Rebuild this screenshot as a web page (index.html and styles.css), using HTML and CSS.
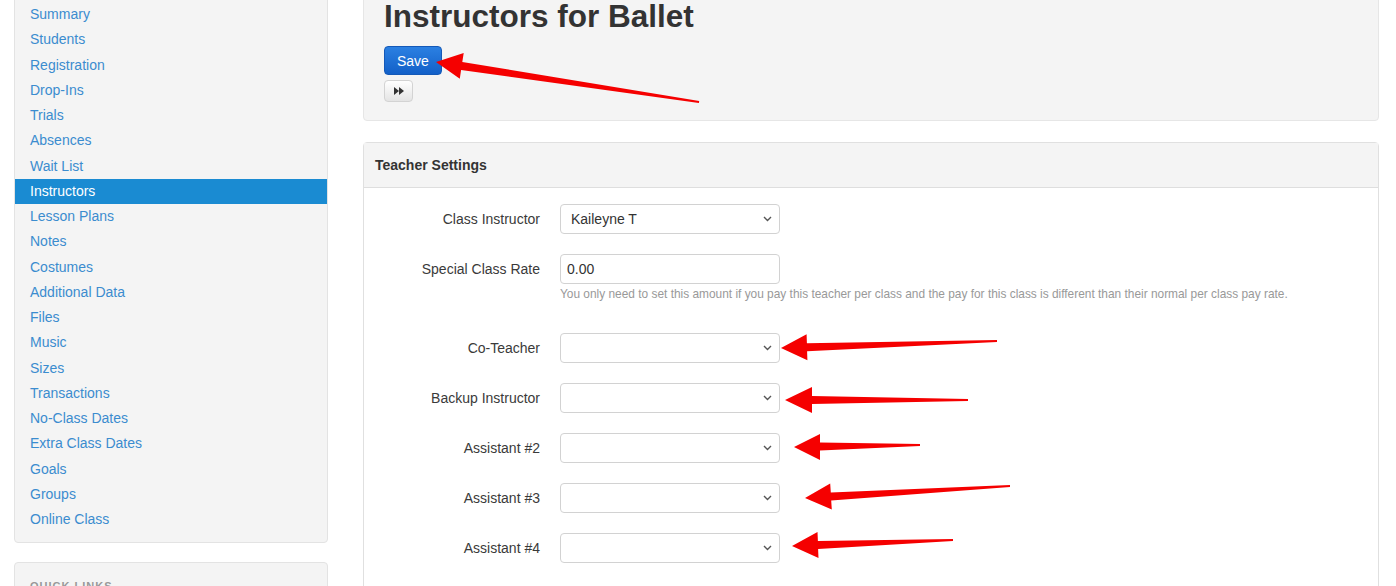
FILE: index.html
```html
<!DOCTYPE html>
<html lang="en">
<head>
    <meta charset="UTF-8">
    <title>Instructors for Ballet</title>
    <link rel="stylesheet" href="styles.css">
</head>
<body>
    <div class="page">
        <aside class="sidebar">
            <div class="side-panel">
                <ul class="side-nav">
                    <li><a href="#">Summary</a></li>
                    <li><a href="#">Students</a></li>
                    <li><a href="#">Registration</a></li>
                    <li><a href="#">Drop-Ins</a></li>
                    <li><a href="#">Trials</a></li>
                    <li><a href="#">Absences</a></li>
                    <li><a href="#">Wait List</a></li>
                    <li class="active"><a href="#">Instructors</a></li>
                    <li><a href="#">Lesson Plans</a></li>
                    <li><a href="#">Notes</a></li>
                    <li><a href="#">Costumes</a></li>
                    <li><a href="#">Additional Data</a></li>
                    <li><a href="#">Files</a></li>
                    <li><a href="#">Music</a></li>
                    <li><a href="#">Sizes</a></li>
                    <li><a href="#">Transactions</a></li>
                    <li><a href="#">No-Class Dates</a></li>
                    <li><a href="#">Extra Class Dates</a></li>
                    <li><a href="#">Goals</a></li>
                    <li><a href="#">Groups</a></li>
                    <li><a href="#">Online Class</a></li>
                </ul>
            </div>
            <div class="side-panel quick">
                <h5>Quick Links</h5>
            </div>
        </aside>

        <main class="content">
            <div class="well">
                <h1>Instructors for Ballet</h1>
                <button class="btn btn-primary">Save</button>
                <button class="btn btn-small" title="Next">
                    <svg width="10" height="8" viewBox="0 0 10 8"><polygon points="0,0 5,4 0,8" fill="#333"/><polygon points="5,0 10,4 5,8" fill="#333"/></svg>
                </button>
            </div>

            <div class="panel">
                <div class="panel-heading">Teacher Settings</div>
                <div class="panel-body">
                    <div class="form-row">
                        <label>Class Instructor</label>
                        <div class="select"><span>Kaileyne T</span><svg class="chev" width="9" height="6" viewBox="0 0 9 6"><polyline points="1,1 4.5,4.5 8,1" fill="none" stroke="#555" stroke-width="1.4"/></svg></div>
                    </div>
                    <div class="form-row">
                        <label>Special Class Rate</label>
                        <div class="input">0.00</div>
                        <p class="help">You only need to set this amount if you pay this teacher per class and the pay for this class is different than their normal per class pay rate.</p>
                    </div>
                    <div class="form-row">
                        <label>Co-Teacher</label>
                        <div class="select"><span></span><svg class="chev" width="9" height="6" viewBox="0 0 9 6"><polyline points="1,1 4.5,4.5 8,1" fill="none" stroke="#555" stroke-width="1.4"/></svg></div>
                    </div>
                    <div class="form-row">
                        <label>Backup Instructor</label>
                        <div class="select"><span></span><svg class="chev" width="9" height="6" viewBox="0 0 9 6"><polyline points="1,1 4.5,4.5 8,1" fill="none" stroke="#555" stroke-width="1.4"/></svg></div>
                    </div>
                    <div class="form-row">
                        <label>Assistant #2</label>
                        <div class="select"><span></span><svg class="chev" width="9" height="6" viewBox="0 0 9 6"><polyline points="1,1 4.5,4.5 8,1" fill="none" stroke="#555" stroke-width="1.4"/></svg></div>
                    </div>
                    <div class="form-row">
                        <label>Assistant #3</label>
                        <div class="select"><span></span><svg class="chev" width="9" height="6" viewBox="0 0 9 6"><polyline points="1,1 4.5,4.5 8,1" fill="none" stroke="#555" stroke-width="1.4"/></svg></div>
                    </div>
                    <div class="form-row">
                        <label>Assistant #4</label>
                        <div class="select"><span></span><svg class="chev" width="9" height="6" viewBox="0 0 9 6"><polyline points="1,1 4.5,4.5 8,1" fill="none" stroke="#555" stroke-width="1.4"/></svg></div>
                    </div>
                </div>
            </div>
        </main>
    </div>

    <!-- red annotation arrows drawn over the screenshot -->
    <svg class="annotations" width="1396" height="586" viewBox="0 0 1396 586">
        <g fill="#f50000">
            <polygon points="436,62 463.7,53 462.3,62 699.2,101 698.9,103 461.1,69.9 459.8,78.8"/>
            <polygon points="781,348 806.6,334.2 806.9,343.2 997,340 997,342 807.1,351.2 807.4,360.2"/>
            <polygon points="785,400 812,387 812,396 968,399 968,401 812,404 812,413"/>
            <polygon points="794,447 820,434 820,442.6 920,444 920,446 820,450.6 820,460"/>
            <polygon points="805,498 830.2,483.5 830.8,492.5 1010,485 1010,487 831.2,500.5 831.8,509.5"/>
            <polygon points="792,546 817.5,532 817.9,541 953,539 953,541 818.1,549 818.5,558"/>
        </g>
    </svg>
</body>
</html>
```

FILE: styles.css
```css
body {
    margin: 0;
    font-family: "Liberation Sans", Arial, sans-serif;
    font-size: 14px;
    color: #333;
    background: #fff;
}
.page {
    display: flex;
    gap: 35px;
    padding: 0 17px 0 14px;
    margin-top: -12px;
}

/* sidebar */
.sidebar {
    width: 314px;
    flex-shrink: 0;
}
.side-panel {
    background: #f4f4f4;
    border: 1px solid #e3e3e3;
    border-radius: 4px;
    padding: 13px 0 10px;
    margin-bottom: 19px;
}
.side-nav {
    list-style: none;
    margin: 0;
    padding: 0;
}
.side-nav a {
    display: block;
    padding: 0 15px;
    line-height: 25.25px;
    color: #3b8ccf;
    text-decoration: none;
}
.side-nav .active a {
    background: #1a8bd2;
    color: #fff;
}
.quick {
    padding: 17px 15px;
}
.quick h5 {
    margin: 0;
    font-size: 11px;
    font-weight: bold;
    letter-spacing: 1px;
    text-transform: uppercase;
    color: #999;
}

/* main */
.content {
    flex: 1;
    min-width: 0;
}
.well {
    background: #f4f4f4;
    border: 1px solid #e6e6e6;
    border-radius: 4px;
    padding: 9px 20px 18px;
}
.well h1 {
    margin: 0;
    font-size: 31.5px;
    line-height: 36px;
    font-weight: bold;
    color: #333;
}
.btn {
    display: block;
    font-family: inherit;
    cursor: pointer;
    border-radius: 4px;
}
.btn-primary {
    margin-top: 12px;
    height: 29px;
    padding: 0 12px;
    font-size: 14px;
    color: #fff;
    border: 1px solid #1459b8;
    background: linear-gradient(#2b80e2, #1360c8);
}
.btn-small {
    margin-top: 5px;
    width: 29px;
    height: 22px;
    padding: 0;
    border: 1px solid #d3d3d3;
    background: linear-gradient(#ffffff, #e4e4e4);
    display: flex;
    align-items: center;
    justify-content: center;
}

.panel {
    margin-top: 21px;
    border: 1px solid #e0e0e0;
    border-radius: 4px;
    background: #fff;
}
.panel-heading {
    background: #f4f4f4;
    padding: 0 11px;
    line-height: 44px;
    border-bottom: 1px solid #dedede;
    font-weight: bold;
    color: #333;
}
.panel-body {
    padding: 16px 0 40px;
}
.form-row {
    display: grid;
    grid-template-columns: 176px 220px;
    column-gap: 20px;
    margin-bottom: 20px;
}
.form-row label {
    text-align: right;
    line-height: 30px;
    color: #3a3a3a;
}
.select, .input {
    box-sizing: border-box;
    height: 30px;
    border: 1px solid #d2d2d2;
    border-radius: 4px;
    background: #fff;
    line-height: 28px;
    color: #333;
}
.select {
    display: flex;
    align-items: center;
    justify-content: space-between;
    padding: 0 7px 0 10px;
}
.input {
    padding: 0 6px;
}
.help {
    grid-column: 2;
    margin: 2px 0 10px;
    font-size: 11.9px;
    line-height: 17px;
    color: #999;
    white-space: nowrap;
}

.annotations {
    position: absolute;
    top: 0;
    left: 0;
    pointer-events: none;
}
```
